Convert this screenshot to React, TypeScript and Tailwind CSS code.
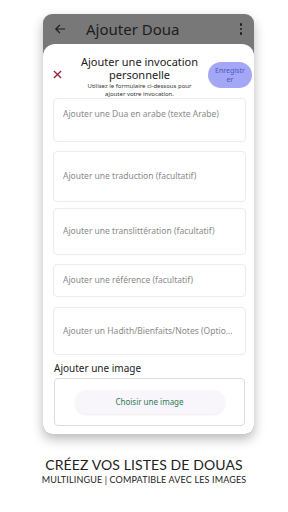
import React from "react";

const fields = [
	{ text: "Ajouter une Dua en arabe (texte Arabe)", h: "h-[44px]", mt: "mt-0", top: true },
	{ text: "Ajouter une traduction (facultatif)", h: "h-[51px]", mt: "mt-[9px]", top: false },
	{ text: "Ajouter une translittération (facultatif)", h: "h-[47px]", mt: "mt-[6px]", top: false },
	{ text: "Ajouter une référence (facultatif)", h: "h-[33px]", mt: "mt-[9px]", top: false },
	{ text: "Ajouter un Hadith/Bienfaits/Notes (Optionnel)", h: "h-[48px]", mt: "mt-[10px]", top: false },
];

const App = (): JSX.Element => {
	return (
		<div className="w-[288px] h-[512px] bg-white flex flex-col items-start overflow-hidden font-['Noto_Sans',sans-serif]">
			<div className="ml-[43px] mt-[14px] w-[211px] h-[420px] rounded-[9px] bg-[#787878] shadow-[0_5px_12px_rgba(0,0,0,0.28)] flex flex-col overflow-hidden">
				{/* app bar */}
				<div className="h-[30px] flex items-center px-[11px] text-[#1c1c1c]">
					<svg width="12" height="12" viewBox="0 0 24 24" fill="none" stroke="currentColor" strokeWidth="2.4" strokeLinecap="square">
						<path d="M21 12H4M11 4.5L3.5 12L11 19.5" />
					</svg>
					<span className="ml-[20px] text-[15px] leading-none">Ajouter Doua</span>
					<div className="ml-auto flex flex-col gap-[2px] mr-[1px]">
						<span className="w-[2.5px] h-[2.5px] rounded-full bg-[#1c1c1c]" />
						<span className="w-[2.5px] h-[2.5px] rounded-full bg-[#1c1c1c]" />
						<span className="w-[2.5px] h-[2.5px] rounded-full bg-[#1c1c1c]" />
					</div>
				</div>

				{/* sheet */}
				<div className="flex-1 bg-white rounded-t-[12px] flex flex-col pt-[11px]">
					<div className="flex items-start">
						<div className="w-[28px] flex justify-center mt-[15px]">
							<svg width="9" height="9" viewBox="0 0 10 10" stroke="#9b2335" strokeWidth="1.5">
								<path d="M1 1L9 9M9 1L1 9" />
							</svg>
						</div>
						<div className="w-[137px] flex flex-col items-center text-center">
							<div className="text-[11px] leading-[13px] text-[#222]">Ajouter une invocation</div>
							<div className="text-[11px] leading-[13px] text-[#222]">personnelle</div>
							<div className="text-[6px] leading-[8px] text-[#333] mt-[1px] w-[110px]">
								Utilisez le formulaire ci-dessous pour ajouter votre invocation.
							</div>
						</div>
						<div className="w-[44px] h-[26px] mt-[7px] rounded-full bg-[#a3a7f6] flex items-center justify-center text-center text-[7px] leading-[9px] text-[#4d58c4]">
							Enregistr
							<br />
							er
						</div>
					</div>

					<div className="px-[10px] flex flex-col">
						{fields.map((f) => (
							<div
								key={f.text}
								className={`${f.h} ${f.mt} w-[193px] rounded-[4px] border border-[#ececec] pl-[9px] pr-[12px] flex ${f.top ? "items-start pt-[9px]" : "items-center"}`}
							>
								<span className="block min-w-0 w-full text-[8.5px] text-[#8a8a8a] truncate">{f.text}</span>
							</div>
						))}
					</div>

					<div className="ml-[11px] mt-[7px] text-[10px] leading-[13px] text-[#222]">Ajouter une image</div>
					<div className="ml-[11px] mt-[3px] w-[191px] h-[48px] rounded-[4px] border border-[#dcdcdc] flex items-center justify-center">
						<div className="w-[150px] h-[24px] rounded-full bg-[#f8f5fb] shadow-[0_1px_2px_rgba(0,0,0,0.08)] flex items-center justify-center text-[8px] text-[#2f7a57]">
							Choisir une image
						</div>
					</div>
				</div>
			</div>

			<div className="w-full flex flex-col items-center mt-[23px] font-['Lato',sans-serif] text-[#222]">
				<div className="text-[14px] leading-[16px] tracking-[0.1px]">CRÉEZ VOS LISTES DE DOUAS</div>
				<div className="text-[9px] leading-[11px] mt-[1px] tracking-[0.15px]">MULTILINGUE | COMPATIBLE AVEC LES IMAGES</div>
			</div>
		</div>
	);
};

export default App;
